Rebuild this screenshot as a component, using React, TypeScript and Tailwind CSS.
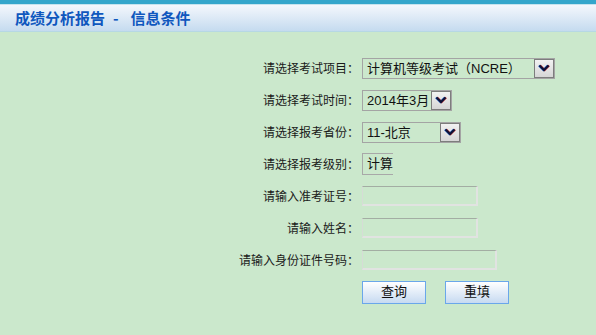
import React from 'react';

const font = { fontFamily: '"Liberation Sans", "Noto Sans CJK SC", sans-serif' };

const Arrow: React.FC = () => (
  <div className="h-full w-[20px] border border-[#7d7d7d] bg-gradient-to-b from-[#f2f2f2] to-[#d6d6d6] flex items-center justify-center shrink-0">
    <svg width="12" height="8" viewBox="0 0 12 8">
      <path d="M1.5 1.5 L6 6 L10.5 1.5" fill="none" stroke="#c03030" strokeWidth="2.2" transform="translate(0.6,0)" />
      <path d="M1.5 1.5 L6 6 L10.5 1.5" fill="none" stroke="#2a6ad0" strokeWidth="2.2" transform="translate(-0.6,0)" />
      <path d="M1.5 1.5 L6 6 L10.5 1.5" fill="none" stroke="#111133" strokeWidth="2" />
    </svg>
  </div>
);

const Select: React.FC<{ value: string; width: string }> = ({ value, width }) => (
  <div className={`${width} h-[21px] border border-[#a4a4a4] flex items-stretch`}>
    <div className="flex-1 pl-[4px] text-[13px] leading-[19px] text-[#111] whitespace-nowrap overflow-hidden">{value}</div>
    <Arrow />
  </div>
);

const TextInput: React.FC<{ width: string }> = ({ width }) => (
  <div className={`${width} h-[20px] border-t border-t-[#a3ada3] border-l border-l-[#d6dcd6] border-r-2 border-r-[#e1e3e1] border-b-2 border-b-[#e1e3e1]`} />
);

const Row: React.FC<{ label: string; children: React.ReactNode }> = ({ label, children }) => (
  <div className="h-[32px] flex items-center">
    <div className="w-[359px] text-right text-[12px] text-[#1a1a1a] shrink-0" style={{ fontFamily: '"Noto Sans CJK SC", sans-serif' }}>{label}</div>
    <div className="ml-[3px] flex items-center">{children}</div>
  </div>
);

const Button: React.FC<{ label: string }> = ({ label }) => (
  <button className="w-[64px] h-[23px] border border-[#6aa7ea] bg-gradient-to-b from-[#ffffff] to-[#c7daf1] text-[13px] text-[#111] leading-[20px]">
    {label}
  </button>
);

export default function App() {
  return (
    <div className="w-full h-[335px] bg-[#cbe8cc] overflow-hidden" style={font}>
      <div className="h-[32px] flex flex-col">
        <div className="h-[4px] bg-[#35a6cb]" />
        <div className="h-[1px] bg-[#c6e3ee]" />
        <div className="flex-1 bg-gradient-to-b from-[#f4f7fc] to-[#c5dbef] flex items-center pl-[15px] text-[15px] font-bold text-[#0f57be]" style={{ fontFamily: '"Noto Sans CJK SC", sans-serif' }}>
          <span>成绩分析报告</span>
          <span className="ml-[8px] mr-[12px]">-</span>
          <span>信息条件</span>
        </div>
        <div className="h-[1px] bg-[#b6d8e4]" />
      </div>

      <div className="pt-[20px] flex flex-col">
        <Row label="请选择考试项目：">
          <Select value="计算机等级考试（NCRE）" width="w-[193px]" />
        </Row>
        <Row label="请选择考试时间：">
          <Select value="2014年3月" width="w-[90px]" />
        </Row>
        <Row label="请选择报考省份：">
          <Select value="11-北京" width="w-[99px]" />
        </Row>
        <Row label="请选择报考级别：">
          <div className="w-[31px] h-[22px] border-l border-t border-b border-[#a8a8a8] pl-[4px] text-[13px] leading-[20px] text-[#111] whitespace-nowrap">
            计算
          </div>
        </Row>
        <Row label="请输入准考证号：">
          <TextInput width="w-[116px]" />
        </Row>
        <Row label="请输入姓名：">
          <TextInput width="w-[116px]" />
        </Row>
        <Row label="请输入身份证件号码：">
          <TextInput width="w-[135px]" />
        </Row>
        <div className="h-[32px] flex items-center pl-[362px] gap-[19px]">
          <Button label="查询" />
          <Button label="重填" />
        </div>
      </div>
    </div>
  );
}
